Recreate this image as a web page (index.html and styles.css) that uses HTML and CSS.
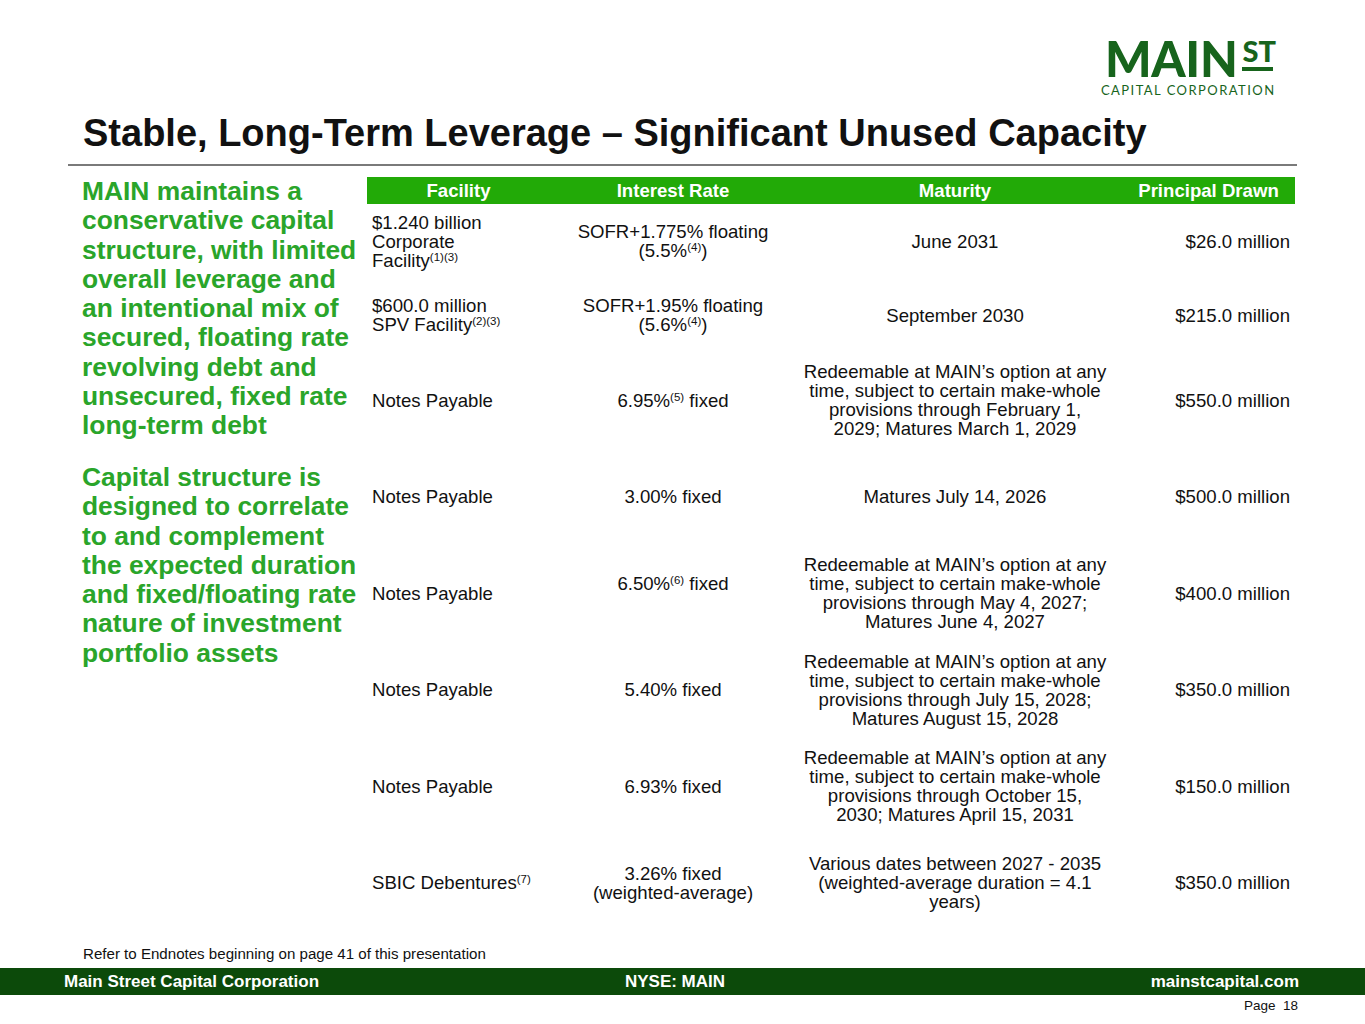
FILE: index.html
```html
<!DOCTYPE html>
<html lang="en">
<head>
<meta charset="utf-8">
<title>Stable, Long-Term Leverage</title>
<link rel="stylesheet" href="styles.css">
</head>
<body>
<div class="slide">
  <header class="top">
    <div class="logo">
      <div class="logo-main">
        <span class="logo-word">MAIN</span>
        <span class="logo-st"><span class="st-text">ST</span><span class="st-bar"></span></span>
      </div>
      <div class="logo-sub">CAPITAL CORPORATION</div>
    </div>
  </header>
  <h1 class="title">Stable, Long-Term Leverage – Significant Unused Capacity</h1>
  <hr class="divider">
  <main class="content">
    <div class="summary">
      <p class="para">MAIN maintains a<br>conservative capital<br>structure, with limited<br>overall leverage and<br>an intentional mix of<br>secured, floating rate<br>revolving debt and<br>unsecured, fixed rate<br>long-term debt</p>
      <p class="para">Capital structure is<br>designed to correlate<br>to and complement<br>the expected duration<br>and fixed/floating rate<br>nature of investment<br>portfolio assets</p>
    </div>
    <table class="debt">
      <colgroup>
        <col class="c1"><col class="c2"><col class="c3"><col class="c4">
      </colgroup>
      <thead>
        <tr><th>Facility</th><th>Interest Rate</th><th>Maturity</th><th>Principal Drawn</th></tr>
      </thead>
      <tbody>
        <tr class="r-short">
          <td class="fac">$1.240 billion<br>Corporate<br>Facility<sup>(1)(3)</sup></td>
          <td class="mid">SOFR+1.775% floating<br>(5.5%<sup>(4)</sup>)</td>
          <td class="mid">June 2031</td>
          <td class="amt">$26.0 million</td>
        </tr>
        <tr class="r-short">
          <td class="fac">$600.0 million<br>SPV Facility<sup>(2)(3)</sup></td>
          <td class="mid">SOFR+1.95% floating<br>(5.6%<sup>(4)</sup>)</td>
          <td class="mid">September 2030</td>
          <td class="amt">$215.0 million</td>
        </tr>
        <tr class="r-tall">
          <td class="fac">Notes Payable</td>
          <td class="mid">6.95%<sup>(5)</sup> fixed</td>
          <td class="mid">Redeemable at MAIN’s option at any<br>time, subject to certain make-whole<br>provisions through February 1,<br>2029; Matures March 1, 2029</td>
          <td class="amt">$550.0 million</td>
        </tr>
        <tr class="r-tall">
          <td class="fac">Notes Payable</td>
          <td class="mid">3.00% fixed</td>
          <td class="mid">Matures July 14, 2026</td>
          <td class="amt">$500.0 million</td>
        </tr>
        <tr class="r-tall">
          <td class="fac">Notes Payable</td>
          <td class="mid"><span class="raise">6.50%<sup>(6)</sup> fixed</span></td>
          <td class="mid">Redeemable at MAIN’s option at any<br>time, subject to certain make-whole<br>provisions through May 4, 2027;<br>Matures June 4, 2027</td>
          <td class="amt">$400.0 million</td>
        </tr>
        <tr class="r-tall">
          <td class="fac">Notes Payable</td>
          <td class="mid">5.40% fixed</td>
          <td class="mid">Redeemable at MAIN’s option at any<br>time, subject to certain make-whole<br>provisions through July 15, 2028;<br>Matures August 15, 2028</td>
          <td class="amt">$350.0 million</td>
        </tr>
        <tr class="r-tall">
          <td class="fac">Notes Payable</td>
          <td class="mid">6.93% fixed</td>
          <td class="mid">Redeemable at MAIN’s option at any<br>time, subject to certain make-whole<br>provisions through October 15,<br>2030; Matures April 15, 2031</td>
          <td class="amt">$150.0 million</td>
        </tr>
        <tr class="r-tall">
          <td class="fac">SBIC Debentures<sup>(7)</sup></td>
          <td class="mid">3.26% fixed<br>(weighted-average)</td>
          <td class="mid">Various dates between 2027 - 2035<br>(weighted-average duration = 4.1<br>years)</td>
          <td class="amt">$350.0 million</td>
        </tr>
      </tbody>
    </table>
  </main>
  <p class="endnote">Refer to Endnotes beginning on page 41 of this presentation</p>
  <footer class="bar">
    <span class="bar-left">Main Street Capital Corporation</span>
    <span class="bar-mid">NYSE: MAIN</span>
    <span class="bar-right">mainstcapital.com</span>
  </footer>
  <div class="page">Page&nbsp; 18</div>
</div>
</body>
</html>
```
FILE: styles.css
```css
* { box-sizing: border-box; }
html, body { margin: 0; padding: 0; background: #fff; }
body { font-family: "Liberation Sans", Arial, sans-serif; color: #111; }

.slide { width: 1365px; height: 1024px; overflow: hidden; }

.top { height: 113px; display: flex; justify-content: flex-end; padding: 36px 89px 0 0; }

.logo { display: flex; flex-direction: column; align-items: flex-start; color: #17641c; }
.logo-main { display: flex; align-items: flex-start; height: 45px; padding-left: 5px; }
.logo-word { font-family: Lato, "Open Sans", sans-serif; font-weight: 900; font-size: 49px; line-height: 45px; height: 45px; letter-spacing: -0.3px; }
.logo-st { display: flex; flex-direction: column; align-items: stretch; margin-left: 4px; padding-top: 4px; }
.st-text { font-family: Lato, "Open Sans", sans-serif; font-weight: 900; font-size: 29px; line-height: 22px; letter-spacing: 0; padding-left: 1px; }
.st-bar { height: 4px; background: #17641c; margin-top: 5px; width: 31px; }
.logo-sub { font-family: Lato, "Open Sans", sans-serif; font-weight: 400; font-size: 13px; line-height: 14px; height: 14px; letter-spacing: 1.45px; margin-top: 2px; margin-left: 1px; white-space: nowrap; }

.title { margin: 0; padding-left: 83px; font-size: 38px; font-weight: bold; line-height: 40px; height: 40px; color: #111; white-space: nowrap; }

.divider { margin: 11px 0 0 68px; width: 1229px; height: 2px; border: 0; background: #7a7a7a; }

.content { display: flex; align-items: flex-start; padding-top: 11px; }

.summary { width: 285px; margin-left: 82px; }
.para { margin: 0; font-size: 26.4px; font-weight: bold; line-height: 29.25px; color: #2aa52a; white-space: nowrap; }
.para + .para { margin-top: 22.75px; }

.debt { border-collapse: collapse; table-layout: fixed; width: 928px; font-size: 18.6px; line-height: 19px; color: #111; }
.c1 { width: 183px; } .c2 { width: 246px; } .c3 { width: 318px; } .c4 { width: 181px; }
.debt th { background: #22aa07; color: #fff; font-weight: bold; height: 27px; padding: 0; text-align: center; vertical-align: middle; line-height: 27px; }
.debt th:last-child { padding-left: 8px; }
.debt td { padding: 0; vertical-align: middle; white-space: nowrap; }
.r-short td { height: 74px; }
.r-tall td { height: 96.5px; }
.fac { text-align: left; padding-left: 5px !important; }
.mid { text-align: center; }
.amt { text-align: right; padding-right: 5px !important; }
.raise { position: relative; top: -10px; }
sup { font-size: 11.5px; line-height: 0; vertical-align: 6px; }

.endnote { margin: 14px 0 0 83px; font-size: 15.1px; line-height: 18px; height: 18px; color: #111; }

.bar { margin-top: 5px; height: 27px; background: #0c4a0a; color: #fff; font-weight: bold; font-size: 17px; display: grid; grid-template-columns: 1fr auto 1fr; align-items: center; padding: 0 66px 0 64px; }
.bar-left { justify-self: start; }
.bar-mid { justify-self: center; margin-right: 13px; }
.bar-right { justify-self: end; }

.page { text-align: right; padding-right: 67px; font-size: 13.5px; line-height: 18px; margin-top: 2px; color: #111; }
```
